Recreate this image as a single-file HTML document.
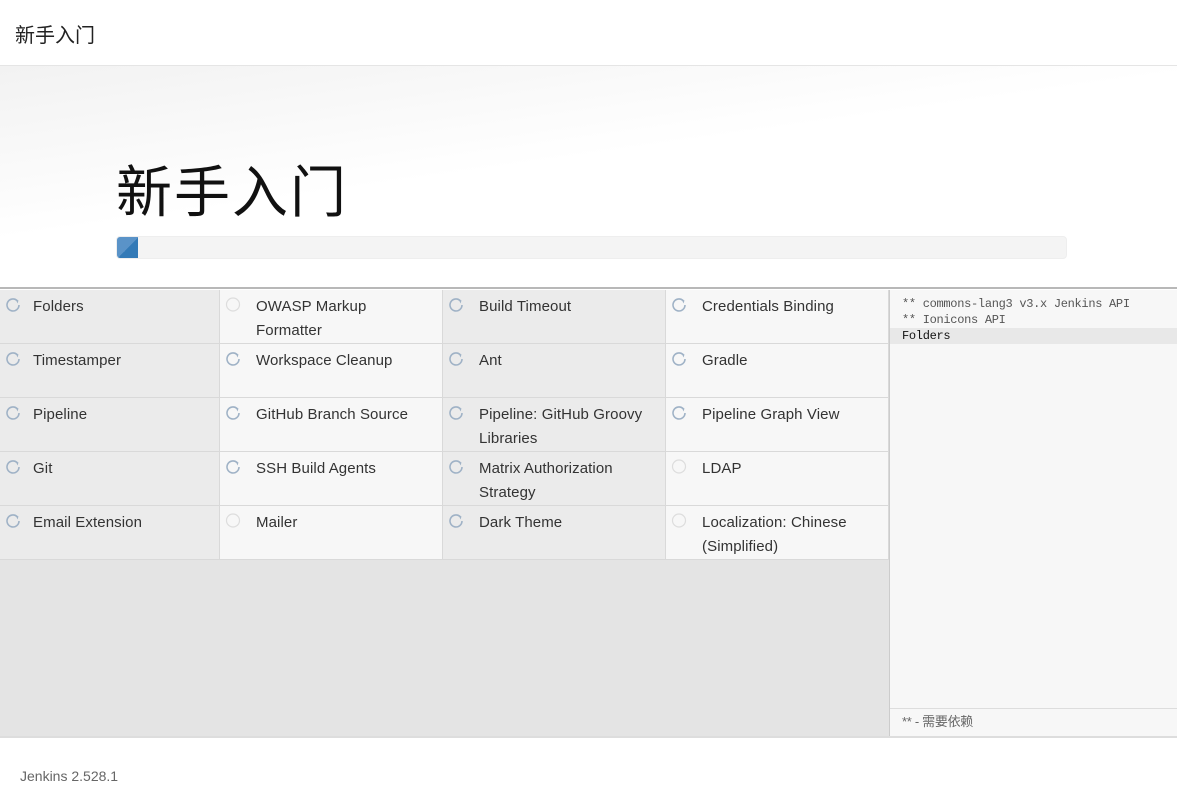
<!DOCTYPE html>
<html><head><meta charset="utf-8"><style>
*{box-sizing:border-box;margin:0;padding:0}
body{width:1177px;height:809px;overflow:hidden;background:#fff;font-family:"Liberation Sans","Noto Sans CJK SC",sans-serif;color:#333;position:relative}
.hdr{position:absolute;left:0;top:0;width:1177px;height:66px;border-bottom:1px solid #e5e5e5;font-size:20px;padding:19px 15px;color:#222}
.hero{position:absolute;left:0;top:66px;width:1177px;height:223px;background:linear-gradient(172deg,#f2f2f2,#fff 45%);border-bottom:2px solid #b8b8b8}
.hero h1{position:absolute;left:116px;top:95px;font-size:56px;line-height:64px;font-weight:400;color:#111;letter-spacing:2px}
.bar{position:absolute;left:116px;top:170px;width:951px;height:23px;background:#f4f4f4;border:1px solid #eee;border-radius:4px;overflow:hidden}
.bar div{width:21px;height:23px;background:linear-gradient(135deg,#5a93c8 50%,#337ab7 50%)}
.grid{position:absolute;left:0;top:290px;width:889px;height:446px;background:#e4e4e4}
.cell{position:absolute;height:54px;border-right:1px solid #d9d9d9;border-bottom:1px solid #d9d9d9;font-size:15px;line-height:24px;padding:5px 18px 0 0;color:#333;letter-spacing:0.1px}
.cell.a{background:#ebebeb}.cell.b{background:#f7f7f7}
.cell svg{position:absolute;left:4px;top:6px}
.side{position:absolute;left:889px;top:290px;width:288px;height:446px;background:#f7f7f7;border-left:1px solid #ccc;font-family:"Liberation Mono","Noto Sans CJK SC",monospace;font-size:12px;color:#555;letter-spacing:-0.3px}
.side .l{padding-left:12px;height:16px;line-height:16px}
.side .sel{background:#e8e8e8;color:#111}
.side .ft{position:absolute;left:0;top:418px;width:288px;height:28px;border-top:1px solid #ddd;padding-left:12px;line-height:26px;font-family:"Liberation Sans","Noto Sans CJK SC",sans-serif;font-size:13px;color:#666}
.foot{position:absolute;left:0;top:736px;width:1177px;height:73px;border-top:2px solid #ddd;font-size:14px;color:#666;padding:30px 20px}
</style></head><body>
<div class="hdr">新手入门</div>
<div class="hero"><h1>新手入门</h1><div class="bar"><div></div></div></div>
<div class="grid" id="g"></div>
<div class="side">
<div style="height:6px"></div>
<div class="l">** commons-lang3 v3.x Jenkins API</div>
<div class="l">** Ionicons API</div>
<div class="l sel">Folders</div>
<div class="ft">** - 需要依赖</div>
</div>
<div class="foot">Jenkins 2.528.1</div>
<script>
var R='<svg width="18" height="18" viewBox="0 0 18 18"><path d="M15 9a6 6 0 1 1-2-4.5" fill="none" stroke="#9fb2c6" stroke-width="1.6"/><path d="M11.5 3l3 1.5-1 3z" fill="#9fb2c6"/></svg>';
var C='<svg width="18" height="18" viewBox="0 0 18 18"><circle cx="9" cy="8.5" r="6.5" fill="none" stroke="#ddd" stroke-width="1.2"/></svg>';
var d=[["Folders",1],["OWASP Markup Formatter",0],["Build Timeout",1],["Credentials Binding",1],
["Timestamper",1],["Workspace Cleanup",1],["Ant",1],["Gradle",1],
["Pipeline",1],["GitHub Branch Source",1],["Pipeline: GitHub Groovy Libraries",1],["Pipeline Graph View",1],
["Git",1],["SSH Build Agents",1],["Matrix Authorization Strategy",1],["LDAP",0],
["Email Extension",1],["Mailer",0],["Dark Theme",1],["Localization: Chinese (Simplified)",0]];
var xs=[0,220,443,666,889],h='';
d.forEach(function(e,i){var c=i%4,r=Math.floor(i/4);
h+='<div class="cell '+(c%2?'b':'a')+'" style="left:'+xs[c]+'px;top:'+(r*54)+'px;width:'+(xs[c+1]-xs[c])+'px;padding-left:'+(c?36:33)+'px">'+(e[1]?R:C)+e[0]+'</div>';});
document.getElementById('g').innerHTML=h;
</script>
</body></html>
